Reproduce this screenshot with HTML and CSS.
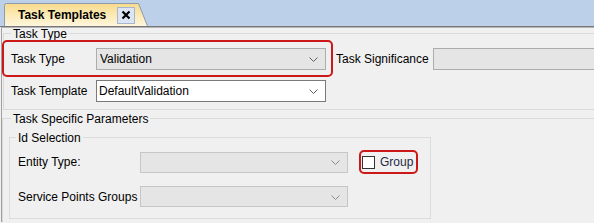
FILE: index.html
```html
<!DOCTYPE html>
<html>
<head>
<meta charset="utf-8">
<link rel="stylesheet" href="styles.css">
</head>
<body>
<div class="tabbar">
  <div class="tab">
    <svg class="tab-shape" width="146" height="23" viewBox="0 0 146 23">
      <defs>
        <linearGradient id="tg" x1="0" y1="0" x2="0" y2="1">
          <stop offset="0" stop-color="#f8da8a"/>
          <stop offset="0.45" stop-color="#fbe8b0"/>
          <stop offset="1" stop-color="#fef6dc"/>
        </linearGradient>
      </defs>
      <path d="M0.5,23 V2.5 Q0.5,0.5 2.5,0.5 H134.5 L143.5,23" fill="url(#tg)" stroke="#8e9aad" stroke-width="1"/>
    </svg>
    <span class="tab-title">Task Templates</span>
    <span class="tab-close">
      <svg width="10" height="10" viewBox="0 0 10 10"><path d="M1.5,1.5 L8.5,8.5 M8.5,1.5 L1.5,8.5" stroke="#000" stroke-width="2.2"/></svg>
    </span>
  </div>
</div>
<div class="panel">
  <div class="grp grp-type">
    <div class="legend">Task Type</div>
    <div class="row row-type">
      <div class="hl hl-type">
        <span class="lbl lbl-main">Task Type</span>
        <div class="combo combo-main disabled">
          <span class="val">Validation</span>
          <svg class="chev" width="9" height="5" viewBox="0 0 9 5"><path d="M0.5,0.5 L4.5,4.5 L8.5,0.5" fill="none" stroke="#606060" stroke-width="1"/></svg>
        </div>
      </div>
      <span class="lbl lbl-sig">Task Significance</span>
      <div class="textbox disabled"></div>
    </div>
    <div class="row row-template">
      <span class="lbl lbl-main">Task Template</span>
      <div class="combo combo-main enabled">
        <span class="val">DefaultValidation</span>
        <svg class="chev" width="9" height="5" viewBox="0 0 9 5"><path d="M0.5,0.5 L4.5,4.5 L8.5,0.5" fill="none" stroke="#606060" stroke-width="1"/></svg>
      </div>
    </div>
  </div>
  <div class="grp grp-params">
    <div class="legend">Task Specific Parameters</div>
    <div class="grp grp-id">
      <div class="legend legend-id">Id Selection</div>
      <div class="row row-entity">
        <span class="lbl lbl-id">Entity Type:</span>
        <div class="combo combo-id disabled">
          <svg class="chev" width="9" height="5" viewBox="0 0 9 5"><path d="M0.5,0.5 L4.5,4.5 L8.5,0.5" fill="none" stroke="#8a8a8a" stroke-width="1"/></svg>
        </div>
        <div class="hl hl-group">
          <span class="check"></span>
          <span class="check-lbl">Group</span>
        </div>
      </div>
      <div class="row row-sp">
        <span class="lbl lbl-id">Service Points Groups</span>
        <div class="combo combo-id disabled">
          <svg class="chev" width="9" height="5" viewBox="0 0 9 5"><path d="M0.5,0.5 L4.5,4.5 L8.5,0.5" fill="none" stroke="#8a8a8a" stroke-width="1"/></svg>
        </div>
      </div>
    </div>
  </div>
</div>
</body>
</html>
```
FILE: styles.css
```css
html, body {
  margin: 0;
  padding: 0;
}
body {
  width: 594px;
  height: 223px;
  overflow: hidden;
  background: #f0f0f0;
  font-family: "Liberation Sans", Arial, sans-serif;
  font-size: 12px;
  color: #000;
}
.tabbar {
  height: 26px;
  background: #bdd0e9;
  border-bottom: 1px solid #777;
  display: flex;
  align-items: flex-end;
}
.tab {
  position: relative;
  width: 146px;
  height: 23px;
  margin-left: 4px;
  display: flex;
  align-items: center;
}
.tab-shape {
  position: absolute;
  left: 0;
  top: 0;
}
.tab-title {
  position: relative;
  margin-left: 14px;
  font-weight: bold;
  font-size: 12px;
  line-height: 14px;
  margin-top: 1px;
}
.tab-close {
  position: relative;
  margin-left: 11px;
  width: 16px;
  height: 15px;
  margin-top: 1px;
  background: #dbe5f3;
  border: 1px solid #a6b6cd;
  display: flex;
  align-items: center;
  justify-content: center;
}
.panel {
  box-sizing: border-box;
  width: 593px;
  height: 195px;
  border-top: 1px solid #b4b4b4;
  border-left: 1px solid #a0a0a0;
  margin-left: 1px;
  overflow: hidden;
}
.grp {
  border: 1px solid #dadada;
}
.legend {
  width: fit-content;
  background: #f0f0f0;
  line-height: 12px;
  height: 12px;
  margin-top: -6px;
  padding: 0 2px;
  white-space: nowrap;
}
.grp-type {
  margin-top: 5px;
  margin-left: 1px;
  padding-bottom: 7px;
  border-right: none;
}
.grp-type > .legend {
  margin-left: 7px;
}
.row {
  display: flex;
  align-items: center;
}
.row-type {
  margin-left: -2px;
}
.hl {
  border: 2px solid #cc1818;
  border-radius: 5px;
  display: flex;
  align-items: center;
  box-sizing: border-box;
}
.hl-type {
  flex: none;
  width: 331px;
  height: 37px;
}
.lbl {
  white-space: nowrap;
  flex: none;
}
.hl-type .lbl-main {
  width: 85px;
  margin-left: 7px;
}
.combo {
  flex: none;
  box-sizing: border-box;
  border: 1px solid #adadad;
  display: flex;
  align-items: center;
  justify-content: space-between;
  padding: 0 7px 0 3px;
}
.combo .val {
  line-height: 14px;
}
.combo.disabled {
  background: #e5e5e5;
}
.combo.enabled {
  background: #ffffff;
  border-color: #7a7a7a;
  padding-left: 2px;
}
.combo-main {
  width: 230px;
  height: 22px;
}
.chev {
  margin-left: auto;
  margin-top: 1px;
}
.lbl-sig {
  margin-left: 3px;
  width: 97px;
}
.textbox {
  flex: 1;
  box-sizing: border-box;
  height: 22px;
  border: 1px solid #adadad;
  border-right: none;
}
.textbox.disabled {
  background: #e5e5e5;
}
.row-template {
  margin-top: 3px;
}
.row-template .lbl-main {
  width: 85px;
  margin-left: 7px;
}
.grp-params {
  margin-top: 8px;
  height: 120px;
  border-right: none;
  border-bottom: none;
}
.grp-params > .legend {
  margin-left: 8px;
}
.grp-id {
  margin-top: 12px;
  margin-left: 6px;
  width: 420px;
  height: 80px;
  border-color: #dcdcdc;
}
.legend-id {
  margin-left: 6px;
}
.row-entity {
  margin-top: 6px;
}
.lbl-id {
  width: 122px;
  margin-left: 8px;
}
.combo-id {
  width: 208px;
  height: 21px;
  border-color: #c6c6c6;
}
.hl-group {
  flex: none;
  margin-left: 11px;
  width: 59px;
  height: 24px;
  padding-left: 1px;
}
.check {
  box-sizing: border-box;
  width: 13px;
  height: 13px;
  border: 1px solid #333;
  background: #fff;
  margin-top: 1px;
}
.check-lbl {
  margin-left: 5px;
  color: #1e2b45;
}
.row-sp {
  margin-top: 12px;
}
```
